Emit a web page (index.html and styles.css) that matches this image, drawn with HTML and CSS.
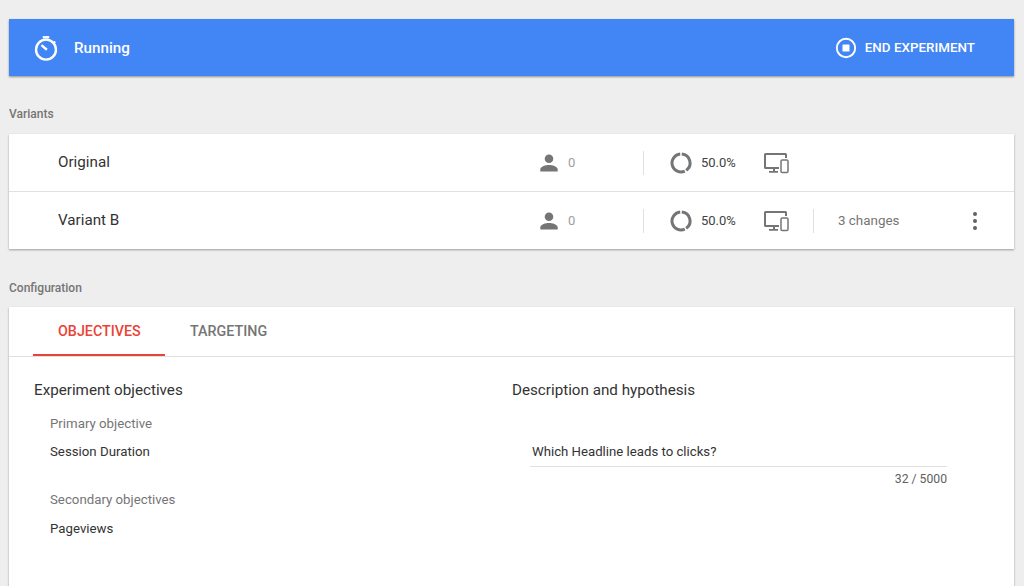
FILE: index.html
```html
<!DOCTYPE html>
<html lang="en">
<head>
<meta charset="utf-8">
<title>Experiment</title>
<link rel="stylesheet" href="styles.css">
</head>
<body>
<main class="page">
  <header class="banner">
    <div class="status">
      <svg class="status-icon" viewBox="0 0 24 24" width="26" height="26"><circle cx="12" cy="13.500" r="9.200" fill="none" stroke="#fff" stroke-width="2.200"/><path d="M9 1h6v2.200H9z" fill="#fff"/><path d="M18.200 7l1.600-1.600 1.400 1.400-1.600 1.600z" fill="#fff"/><path d="M7.800 9.400l5 4.200" stroke="#fff" stroke-width="2.200" fill="none"/></svg>
      <span>Running</span>
    </div>
    <div class="end">
      <svg viewBox="0 0 22 22" width="22" height="22"><circle cx="11" cy="11" r="9.200" fill="none" stroke="#fff" stroke-width="1.900"/><rect x="7.500" y="7.500" width="7" height="7" rx=".6" fill="#fff"/></svg>
      <span>END EXPERIMENT</span>
    </div>
  </header>

  <h2 class="section-label">Variants</h2>
  <section class="card variants">
    <div class="variant">
      <div class="variant-name">Original</div>
      <div class="sessions">
        <svg viewBox="0 0 24 24" width="24" height="24"><path fill="#757575" d="M12 12a4.300 4.300 0 1 0 0-8.600a4.300 4.300 0 0 0 0 8.600zm0 2c-3 0-8.700 1.400-8.700 4.300v2.200h17.400v-2.200c0-2.900-5.700-4.300-8.700-4.300z"/></svg>
        <span>0</span>
      </div>
      <div class="traffic">
        <svg viewBox="0 0 22 22" width="22" height="22"><path fill="none" stroke="#757575" stroke-width="3" d="M11.780 2.030A9 9 0 0 1 16.160 18.370M14.800 19.160A9 9 0 1 1 10.220 2.030"/></svg>
        <span>50.0%</span>
      </div>
      <svg class="devices" viewBox="0 0 26 22" width="26" height="22"><path fill="#757575" d="M2.500 1h20A1.500 1.500 0 0 1 24 2.500V6h-2V3H3v12h13v2h-4v2h3v1.800H6V19h4v-2H2.500A1.500 1.500 0 0 1 1 15.500v-13A1.500 1.500 0 0 1 2.500 1z"/><rect x="18" y="8" width="7" height="12.500" rx="1.300" fill="none" stroke="#757575" stroke-width="1.500"/></svg>
      <div class="changes"></div>
    </div>
    <div class="variant">
      <div class="variant-name">Variant B</div>
      <div class="sessions">
        <svg viewBox="0 0 24 24" width="24" height="24"><path fill="#757575" d="M12 12a4.300 4.300 0 1 0 0-8.600a4.300 4.300 0 0 0 0 8.600zm0 2c-3 0-8.700 1.400-8.700 4.300v2.200h17.400v-2.200c0-2.900-5.700-4.300-8.700-4.300z"/></svg>
        <span>0</span>
      </div>
      <div class="traffic">
        <svg viewBox="0 0 22 22" width="22" height="22"><path fill="none" stroke="#757575" stroke-width="3" d="M11.780 2.030A9 9 0 0 1 16.160 18.370M14.800 19.160A9 9 0 1 1 10.220 2.030"/></svg>
        <span>50.0%</span>
      </div>
      <svg class="devices" viewBox="0 0 26 22" width="26" height="22"><path fill="#757575" d="M2.500 1h20A1.500 1.500 0 0 1 24 2.500V6h-2V3H3v12h13v2h-4v2h3v1.800H6V19h4v-2H2.500A1.500 1.500 0 0 1 1 15.500v-13A1.500 1.500 0 0 1 2.500 1z"/><rect x="18" y="8" width="7" height="12.500" rx="1.300" fill="none" stroke="#757575" stroke-width="1.500"/></svg>
      <div class="changes changes-filled">
        <span>3 changes</span>
        <svg viewBox="0 0 6 20" width="6" height="20"><circle cx="3" cy="3" r="2" fill="#616161"/><circle cx="3" cy="10" r="2" fill="#616161"/><circle cx="3" cy="17" r="2" fill="#616161"/></svg>
      </div>
    </div>
  </section>

  <h2 class="section-label section-label-config">Configuration</h2>
  <section class="card config">
    <nav class="tabs">
      <div class="tab tab-active">OBJECTIVES</div>
      <div class="tab tab-idle">TARGETING</div>
    </nav>
    <div class="panels">
      <div class="objectives">
        <h3 class="panel-title">Experiment objectives</h3>
        <div class="objective-list">
          <div class="objective-label">Primary objective</div>
          <div class="objective-value">Session Duration</div>
          <div class="objective-label objective-label-next">Secondary objectives</div>
          <div class="objective-value">Pageviews</div>
        </div>
      </div>
      <div class="description">
        <h3 class="panel-title">Description and hypothesis</h3>
        <div class="field">
          <div class="field-text">Which Headline leads to clicks?</div>
          <div class="field-count">32 / 5000</div>
        </div>
      </div>
    </div>
  </section>
</main>
</body>
</html>
```

FILE: styles.css
```css
* { box-sizing: border-box; }
html, body { margin: 0; height: 586px; overflow: hidden; }
body { background: #eeeeee; font-family: Roboto, "Liberation Sans", sans-serif; color: #333; }
.page { padding: 19px 10px 0 9px; height: 586px; overflow: hidden; }

.banner {
  height: 57px;
  background: #4285f4;
  color: #fff;
  display: flex;
  align-items: center;
  justify-content: space-between;
  padding: 0 39px 0 24px;
  box-shadow: 0 1px 2px rgba(0,0,0,.4);
}
.status { display: flex; align-items: center; gap: 15px; font-size: 15.200px; font-weight: 500; }
.end { display: flex; align-items: center; gap: 8px; font-size: 13.400px; font-weight: 500; }

.section-label { margin: 30px 0 12px; height: 16px; font-size: 12px; line-height: 16px; font-weight: 500; color: #757575; }
.section-label-config { margin: 31px 0 11px; }

.card { background: #fff; box-shadow: 0 1px 2px rgba(0,0,0,.35); }

.variant {
  height: 57px;
  display: flex;
  align-items: center;
  color: #757575;
}
.variant + .variant { height: 58px; border-top: 1px solid #e0e0e0; }
.variant-name { width: 518px; padding-left: 49px; padding-bottom: 1px; font-size: 15.200px; color: #333; }
.sessions { width: 117px; height: 24px; display: flex; align-items: center; gap: 7px; border-right: 1px solid #e0e0e0; font-size: 13px; color: #9e9e9e; padding-left: 10px; }
.traffic { display: flex; align-items: center; gap: 9px; margin-left: 26px; width: 93px; font-size: 13px; color: #424242; }
.devices { flex: none; }
.changes { flex: 1; display: flex; align-items: center; justify-content: space-between; height: 24px; margin-left: 24px; padding: 0 36px 0 24px; font-size: 13.400px; color: #757575; }
.changes-filled { border-left: 1px solid #e0e0e0; }

.tabs { height: 50px; display: flex; padding-left: 24px; border-bottom: 1px solid #e0e0e0; }
.tab { height: 49px; padding: 0 25px; display: flex; align-items: center; font-size: 14.300px; font-weight: 500; color: #757575; }
.tab-active { color: #ea4335; border-bottom: 2px solid #ea4335; width: 132px; }
.tab-idle { padding-bottom: 2px; }

.panels { display: flex; padding: 23px 25px 0; height: 260px; }
.objectives { width: 478px; }
.panel-title { margin: 0; font-size: 15.200px; line-height: 20px; font-weight: 400; color: #333; }
.objective-list { padding: 14px 0 0 16px; font-size: 13.250px; line-height: 20px; }
.objective-label { color: #757575; }
.objective-label-next { margin-top: 28px; }
.objective-value { margin-top: 8px; color: #333; }
.objective-label-next + .objective-value { margin-top: 9px; }
.description { width: 435px; }
.field { margin: 41px 0 0 18px; }
.field-text { height: 26px; padding: 1px 0 0 2px; font-size: 13.200px; line-height: 20px; border-bottom: 1px solid #e0e0e0; color: #333; }
.field-count { margin-top: 5px; text-align: right; font-size: 12.200px; line-height: 14px; color: #616161; }
```
